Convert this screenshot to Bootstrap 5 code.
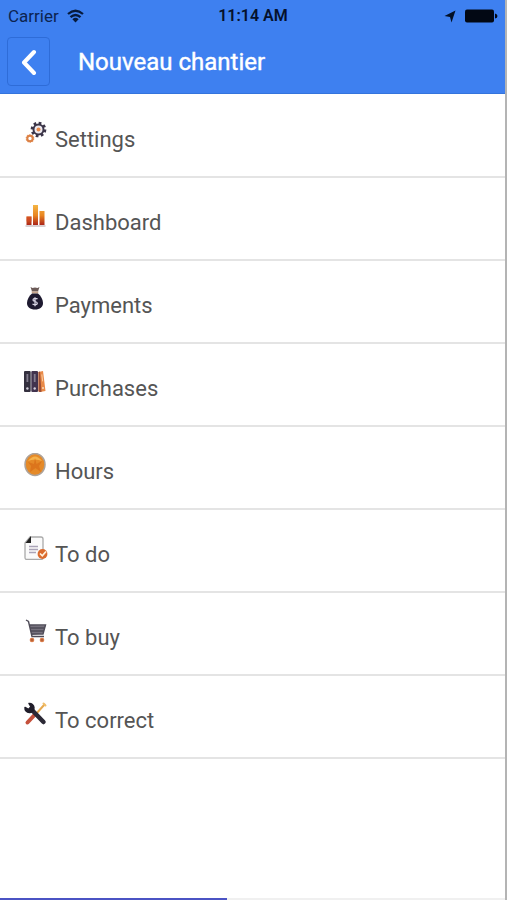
<!DOCTYPE html>
<html lang="fr">
<head>
<meta charset="utf-8">
<meta name="viewport" content="width=device-width, initial-scale=1">
<title>Nouveau chantier</title>
<link href="https://cdn.jsdelivr.net/npm/bootstrap@5.3.0/dist/css/bootstrap.min.css" rel="stylesheet">
<style>
body { font-family: Roboto, "Liberation Sans", sans-serif; color: #555; }
.screen { border-right: 2px solid #b4b4b4; background: #fff; }
.app-head { background: #3e80f0; border-bottom: 1px solid #3474dc; }
.status { height: 32px; padding: 0 7px 0 8px; font-size: 17px; line-height: 32px; color: #0c2450; }
.status .clock { font-size: 16px; font-weight: 600; color: #05112c; }
.toolbar { height: 61px; padding: 0 7px 2px; gap: 28px; }
.back { width: 43px; height: 49px; border: 1px solid #2e6cd8; border-radius: 4px; background: transparent; }
.head-title { font-size: 24px; line-height: 32px; font-weight: 400; color: #fff; -webkit-text-stroke: 0.4px #fff; }
.menu { padding-top: 1px; border-radius: 0; }
.menu .menu-row { height: 83px; padding: 8px 24px 0; gap: 7px; border: 0; border-bottom: 2px solid #e4e4e4; border-radius: 0; font-size: 22px; line-height: 32px; color: #555; background: #fff; }
.menu-row svg { margin-bottom: 14px; }
.loader { height: 2px; background: #f0f0f0; border-radius: 0; }
.loader .progress-bar { background: #4b53c4; }
</style>
</head>
<body>
<div class="screen min-vh-100 d-flex flex-column">
  <header class="app-head">
    <div class="status d-flex align-items-center">
      <div class="col d-flex align-items-center gap-2">
        <span>Carrier</span>
        <svg width="17" height="14" viewBox="0 0 17 14" fill="none" stroke="#071a3c" stroke-width="2.300" aria-hidden="true"><path d="M1 5q7.500-6.500 15 0M3.500 8.200q5-4.500 10 0"/><path d="M5.400 10.300q3.100-2.900 6.200 0L8.500 13.500z" fill="#071a3c" stroke="none"/></svg>
      </div>
      <span class="clock">11:14 AM</span>
      <div class="col d-flex align-items-center justify-content-end gap-2">
        <svg width="12" height="13" viewBox="0 0 12 13" aria-hidden="true"><path d="M11.500.5L7.500 12.500 6 7 .5 6z" fill="#031026"/></svg>
        <svg width="34" height="14" viewBox="0 0 34 14" aria-hidden="true"><rect x="1" y=".5" width="29" height="13" rx="2" fill="#020814"/><path d="M31 4.500q2.500.5 2.500 2.500T31 9.500z" fill="#020814"/></svg>
      </div>
    </div>
    <div class="toolbar d-flex align-items-center">
      <button type="button" class="back btn p-0 d-flex align-items-center justify-content-center" aria-label="Back">
        <svg width="16" height="27" viewBox="0 0 16 27" fill="none" stroke="#fff" stroke-width="4" stroke-linecap="round" stroke-linejoin="round"><path d="M13 4L3 14.500 13 25"/></svg>
      </button>
      <h1 class="head-title m-0">Nouveau chantier</h1>
    </div>
  </header>

  <nav class="menu list-group" aria-label="Menu">
    <a href="#" class="menu-row list-group-item list-group-item-action d-flex align-items-center">
      <svg width="24" height="24" viewBox="0 0 24 24" fill="none" aria-hidden="true"><circle cx="14.500" cy="8.500" r="6.600" stroke="#3b3548" stroke-width="2.500" stroke-dasharray="2.700 2.480"/><circle cx="14.500" cy="8.500" r="5" fill="#eeeaf0" stroke="#3b3548" stroke-width="2"/><circle cx="14.500" cy="8.500" r="2" fill="#e88a4a"/><circle cx="6" cy="17.500" r="3.700" stroke="#e8a070" stroke-width="1.300" stroke-dasharray="1.500 .800"/><circle cx="6" cy="17.500" r="2.700" fill="#fff" stroke="#dc8145" stroke-width="2"/></svg>
      <span>Settings</span>
    </a>
    <a href="#" class="menu-row list-group-item list-group-item-action d-flex align-items-center">
      <svg width="24" height="24" viewBox="0 0 24 24" aria-hidden="true"><defs><linearGradient id="bars" gradientUnits="userSpaceOnUse" x1="0" y1="1" x2="0" y2="22"><stop offset="0" stop-color="#f4b544"/><stop offset=".5" stop-color="#e98520"/><stop offset="1" stop-color="#a51a18"/></linearGradient></defs><path d="M2.500 12.500h5v8.500h-5zM9 1h5v20H9zM15.500 7h5v14h-5z" fill="url(#bars)"/><path d="M2.500 12.500h5v5h-5z" fill="#cf4426" opacity=".7"/><path d="M1.500 22h20" stroke="#b3a2a6"/></svg>
      <span>Dashboard</span>
    </a>
    <a href="#" class="menu-row list-group-item list-group-item-action d-flex align-items-center">
      <svg width="24" height="24" viewBox="0 0 24 24" aria-hidden="true"><path d="M6.500 0l2 1 2.500-.5 2.500.5 2-1-1.500 4.500h-6z" fill="#6c5b58"/><path d="M7.500 4.500h7l-.5 2H8z" fill="#c8a68d"/><path d="M8 6.500h6c3 2.500 5 6 5 9.500 0 4-3 6.500-8 6.500s-8-2.500-8-6.500c0-3.500 2-7 5-9.500z" fill="#1e1a30"/><path d="M13.500 12c-1-1-4.500-1-4.500.9 0 2 4.300 1.200 4.300 3.400 0 2-3.700 1.800-4.800.6M11 10.200v9" fill="none" stroke="#d6d3e2" stroke-width="1.300"/></svg>
      <span>Payments</span>
    </a>
    <a href="#" class="menu-row list-group-item list-group-item-action d-flex align-items-center">
      <svg width="24" height="24" viewBox="0 0 24 24" aria-hidden="true"><rect x="0" y="1" width="6.700" height="21" rx="1" fill="#34303f"/><rect x="7.300" y="1" width="6.700" height="21" rx="1" fill="#41334e"/><path d="M14.500 2l4.500-1L21.500 21 16 22q-1.500 0-1.500-1z" fill="#e98a48"/><path d="M14.500 2l1.500-.4L17.500 22H16q-1.500 0-1.500-1z" fill="#9e5036"/><path d="M2.500 4h1.800v8H2.500zM9.800 4h1.800v8H9.800z" fill="#827c8e"/><path d="M17.300 4.500l1-.2.900 7-1 .2z" fill="#f9cda2"/><circle cx="3.400" cy="18.500" r="1.200" fill="#d3cedb"/><circle cx="10.700" cy="18.500" r="1.200" fill="#d3cedb"/><circle cx="19" cy="18" r="1" fill="#f9d8ba"/></svg>
      <span>Purchases</span>
    </a>
    <a href="#" class="menu-row list-group-item list-group-item-action d-flex align-items-center">
      <svg width="24" height="24" viewBox="0 0 24 24" aria-hidden="true"><ellipse cx="11" cy="11.500" rx="10" ry="11" fill="#e58a28" stroke="#ada39b" stroke-width="1.500"/><path d="M4 8Q11-1 18 8q-7-3-14 0z" fill="#f6b34c"/><path d="M4 9l6 2 1-6 1.500 6L18 8l-3 5 2 6-5.500-4L6 19l1-6z" fill="#d4600f" opacity=".5"/></svg>
      <span>Hours</span>
    </a>
    <a href="#" class="menu-row list-group-item list-group-item-action d-flex align-items-center">
      <svg width="24" height="24" viewBox="0 0 24 24" aria-hidden="true"><path d="M6 1h11q2 0 2 2v19q0 1.500-2 1.500H3q-2 0-2-2V7z" fill="#fafafa" stroke="#aaa" stroke-width="1.300"/><path d="M7 0v7H1.500z" fill="#222"/><path d="M5 10.500h9M5 13.500h9M5 16.500h7" stroke="#aaa4b8" stroke-width="1.300"/><circle cx="18.500" cy="18" r="4.900" fill="#db6b2e"/><path d="M16 17.500l2.300 2.300 3.700-4.300" fill="none" stroke="#fff2df" stroke-width="1.700"/></svg>
      <span>To do</span>
    </a>
    <a href="#" class="menu-row list-group-item list-group-item-action d-flex align-items-center">
      <svg width="24" height="24" viewBox="0 0 24 24" aria-hidden="true"><path d="M5.500 6L21.500 6.500 19 14.500 7.500 16z" fill="#77727e"/><path d="M2 1l2.500 1.500L8 17.500h12M6 9h14M7 12h12.500M5.500 6h16L19 15H8" fill="none" stroke="#4e4b57" stroke-width="1.400"/><circle cx="8" cy="21" r="2.300" fill="#d87b48"/><circle cx="18" cy="21" r="2.300" fill="#d87b48"/><circle cx="8" cy="21" r=".7" fill="#7b3923"/><circle cx="18" cy="21" r=".7" fill="#7b3923"/></svg>
      <span>To buy</span>
    </a>
    <a href="#" class="menu-row list-group-item list-group-item-action d-flex align-items-center">
      <svg width="24" height="24" viewBox="0 0 24 24" fill="none" stroke-linecap="round" aria-hidden="true"><path d="M12 12L20.500 2.500" stroke="#e6a94f" stroke-width="2"/><path d="M19.500 1.500l2 2" stroke="#f0bf6c" stroke-width="2"/><path d="M3.500 20.500L10.500 13" stroke="#c5513c" stroke-width="4"/><path d="M7 7L19.500 20" stroke="#2c2936" stroke-width="4.500"/><path d="M5 1.500A4.500 4.500 0 1 1 1 5.500L4.500 7.500l2.500-2.500z" fill="#201e2a" stroke="#201e2a" stroke-width="1.500" stroke-linejoin="round"/></svg>
      <span>To correct</span>
    </a>
  </nav>

  <div class="loader progress mt-auto" role="progressbar" aria-label="Loading" aria-valuenow="45" aria-valuemin="0" aria-valuemax="100">
    <div class="progress-bar" style="width: 45%"></div>
  </div>
</div>
<script src="https://cdn.jsdelivr.net/npm/bootstrap@5.3.0/dist/js/bootstrap.bundle.min.js"></script>
</body>
</html>
